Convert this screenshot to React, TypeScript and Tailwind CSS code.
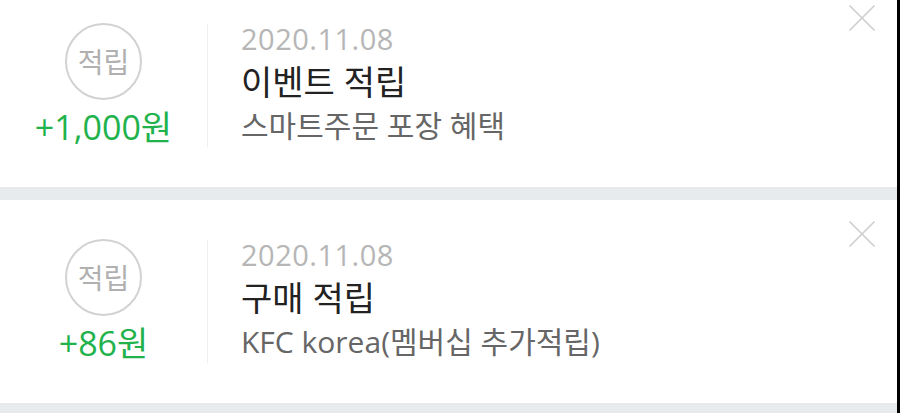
type Entry = {
  id: number;
  amount: string;
  date: string;
  title: string;
  desc: string;
};

const entries: Entry[] = [
  {
    id: 1,
    amount: "+1,000원",
    date: "2020.11.08",
    title: "이벤트 적립",
    desc: "스마트주문 포장 혜택",
  },
  {
    id: 2,
    amount: "+86원",
    date: "2020.11.08",
    title: "구매 적립",
    desc: "KFC korea(멤버십 추가적립)",
  },
];

function CloseIcon() {
  return (
    <svg width="26" height="26" viewBox="0 0 26 26" fill="none">
      <path
        d="M1 1L25 25M25 1L1 25"
        stroke="#cfcfcf"
        strokeWidth="1.7"
        strokeLinecap="round"
      />
    </svg>
  );
}

function PointCard({ entry }: { entry: Entry }) {
  return (
    <div className="relative flex h-[203px] items-center bg-white">
      {/* left: badge + amount */}
      <div className="flex w-[207px] flex-col items-center">
        <div className="flex h-[77px] w-[77px] items-center justify-center rounded-full border-2 border-[#d2d2d2]">
          <span className="text-[28px] leading-none text-[#b0b0b0]">적립</span>
        </div>
        <div className="mt-[6px] text-[34px] leading-[42px] text-[#22b24c]">
          {entry.amount}
        </div>
      </div>

      <div className="h-[123px] w-px bg-[#efefef]" />

      {/* right: details */}
      <div className="flex flex-col pb-[6px] pl-[33px]">
        <div className="text-[29px] leading-[40px] tracking-[0.5px] text-[#b6b6b6]">
          {entry.date}
        </div>
        <div className="text-[34px] leading-[46px] text-[#222222]">
          {entry.title}
        </div>
        <div className="text-[30px] leading-[42px] text-[#666666]">
          {entry.desc}
        </div>
      </div>

      <button className="absolute right-[22px] top-[21px]">
        <CloseIcon />
      </button>
    </div>
  );
}

export default function App() {
  return (
    <div
      className="flex h-[413px] w-[900px] overflow-hidden bg-black"
      style={{ fontFamily: '"Open Sans", "Noto Sans CJK KR", sans-serif' }}
    >
      <div className="flex w-[897px] flex-col gap-[13px] bg-[#e8ebee]">
        <div className="-mt-[16px]">
          <PointCard entry={entries[0]} />
        </div>
        <PointCard entry={entries[1]} />
      </div>
    </div>
  );
}
